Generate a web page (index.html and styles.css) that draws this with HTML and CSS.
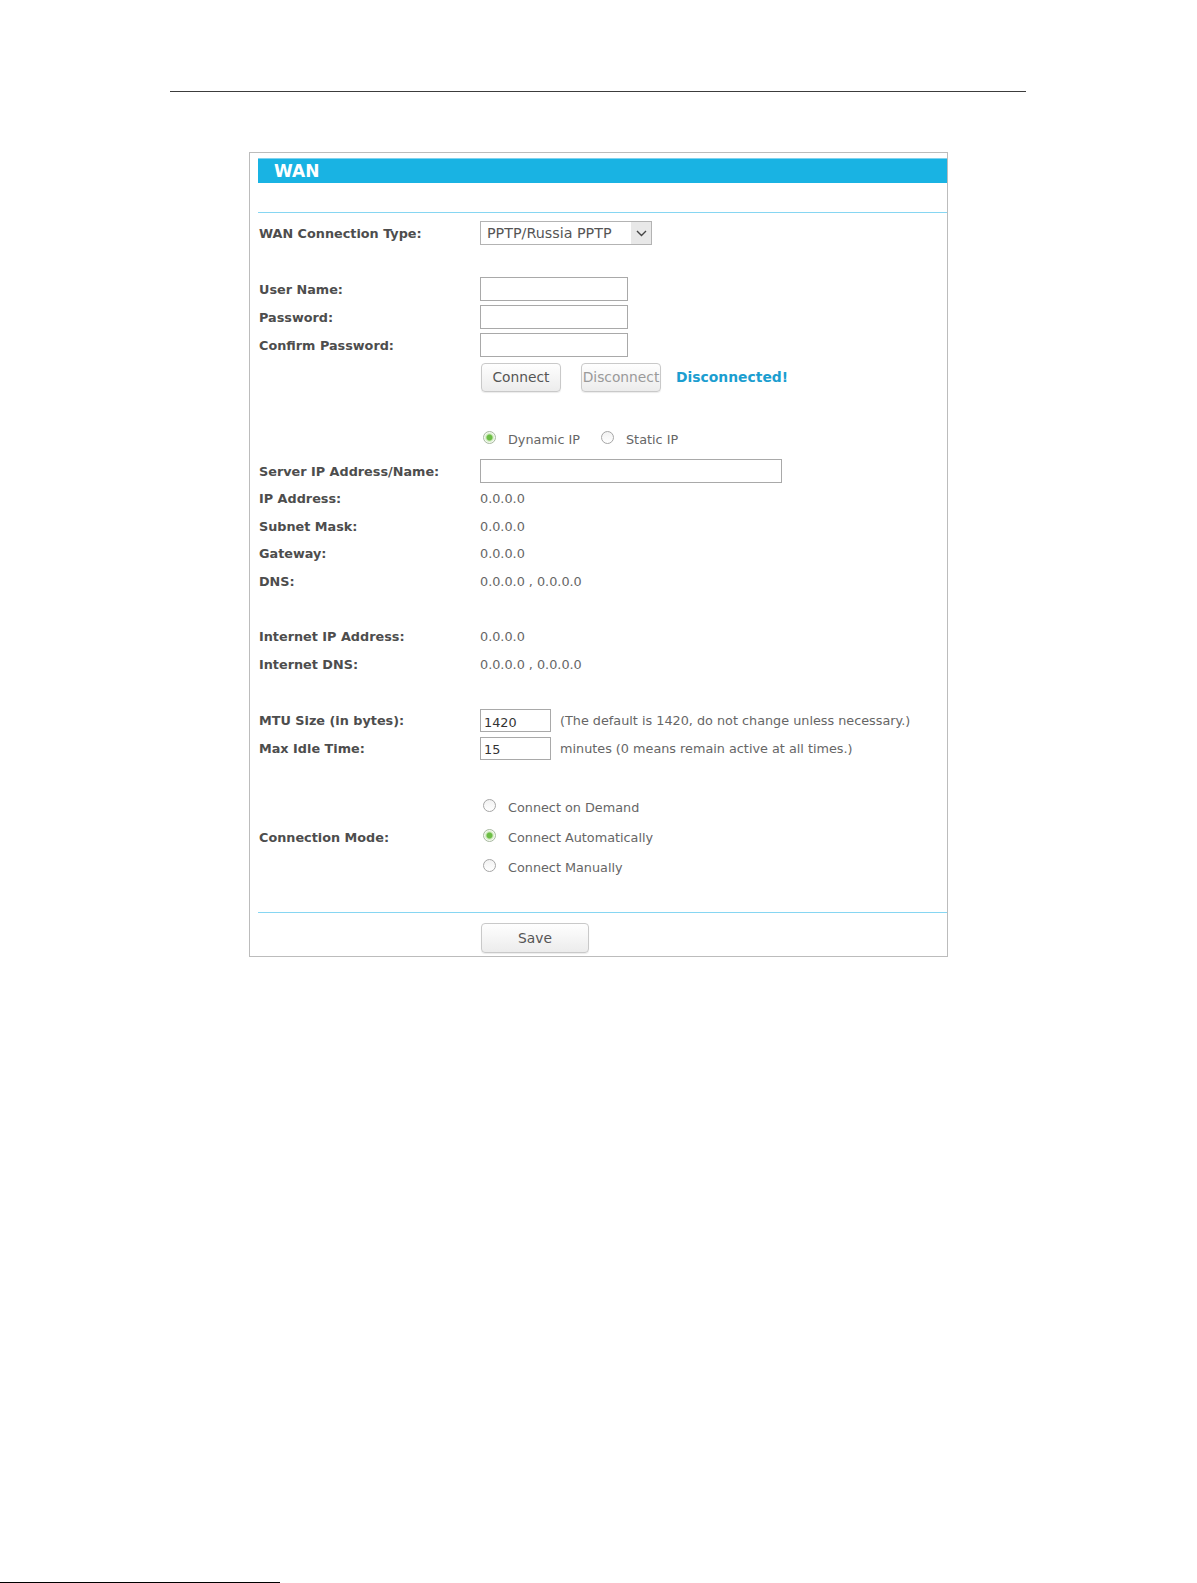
FILE: index.html
```html
<!DOCTYPE html>
<html lang="en">
<head>
  <meta charset="UTF-8">
  <meta name="viewport" content="width=device-width, initial-scale=1.0">
  <title>WAN</title>
  <link rel="stylesheet" href="styles.css">
</head>
<body>

  <div class="page-rule"></div>

  <div class="panel">
    <div class="panel-title">WAN</div>
    <div class="divider"></div>

    <div class="row first">
      <span class="label">WAN Connection Type:</span>
      <div class="select">
        <span class="select-text">PPTP/Russia PPTP</span>
        <span class="select-arrow">
          <svg width="11" height="7" viewBox="0 0 11 7"><polyline points="1,1 5.5,5.5 10,1" fill="none" stroke="#444" stroke-width="1.4"/></svg>
        </span>
      </div>
    </div>

    <div class="section">
      <div class="row">
        <span class="label">User Name:</span>
        <input class="text-input" type="text">
      </div>
      <div class="row">
        <span class="label">Password:</span>
        <input class="text-input" type="password">
      </div>
      <div class="row">
        <span class="label">Confirm Password:</span>
        <input class="text-input" type="password">
      </div>
      <div class="row buttons">
        <span class="label"></span>
        <button class="btn">Connect</button>
        <button class="btn disabled">Disconnect</button>
        <span class="status">Disconnected!</span>
      </div>
    </div>

    <div class="section ip-type">
      <div class="row">
        <span class="label"></span>
        <span class="radio checked"></span><span class="radio-text">Dynamic IP</span>
        <span class="radio second"></span><span class="radio-text">Static IP</span>
      </div>
      <div class="row server">
        <span class="label">Server IP Address/Name:</span>
        <input class="text-input wide" type="text">
      </div>
      <div class="row info">
        <span class="label">IP Address:</span>
        <span class="value">0.0.0.0</span>
      </div>
      <div class="row info">
        <span class="label">Subnet Mask:</span>
        <span class="value">0.0.0.0</span>
      </div>
      <div class="row info">
        <span class="label">Gateway:</span>
        <span class="value">0.0.0.0</span>
      </div>
      <div class="row info">
        <span class="label">DNS:</span>
        <span class="value">0.0.0.0 , 0.0.0.0</span>
      </div>
    </div>

    <div class="section internet">
      <div class="row info">
        <span class="label">Internet IP Address:</span>
        <span class="value">0.0.0.0</span>
      </div>
      <div class="row info">
        <span class="label">Internet DNS:</span>
        <span class="value">0.0.0.0 , 0.0.0.0</span>
      </div>
    </div>

    <div class="section mtu">
      <div class="row info">
        <span class="label">MTU Size (in bytes):</span>
        <input class="text-input short" type="text" value="1420">
        <span class="value hint">(The default is 1420, do not change unless necessary.)</span>
      </div>
      <div class="row info">
        <span class="label">Max Idle Time:</span>
        <input class="text-input short" type="text" value="15">
        <span class="value hint">minutes (0 means remain active at all times.)</span>
      </div>
    </div>

    <div class="section mode">
      <span class="label">Connection Mode:</span>
      <div class="mode-list">
        <div class="mode-item"><span class="radio"></span><span class="radio-text">Connect on Demand</span></div>
        <div class="mode-item"><span class="radio checked"></span><span class="radio-text">Connect Automatically</span></div>
        <div class="mode-item"><span class="radio"></span><span class="radio-text">Connect Manually</span></div>
      </div>
    </div>

    <div class="divider bottom"></div>

    <div class="save-row">
      <button class="btn save">Save</button>
    </div>
  </div>

  <div class="page-foot"></div>

</body>
</html>
```

FILE: styles.css
```css
body { margin: 0; background: #fff; font-family: "DejaVu Sans", Verdana, sans-serif; font-size: 12.8px; color: #666; }
.page-rule { width: 856px; height: 1px; margin: 91px 0 0 170px; background: #3c3c3c; }
.panel { width: 689px; margin: 60px 0 0 249px; border: 1px solid #bcbcbc; padding: 5px 0 3px 8px; }

.panel-title { height: 24px; border-top: 1px solid #7fd2ee; background: #19b3e3; color: #fff; font-weight: bold; font-size: 17px; line-height: 24px; padding-left: 16px; }
.divider { height: 1px; margin-top: 29px; background: #86d6f2; }
.divider.bottom { margin-top: 30px; }

.row { display: flex; align-items: center; height: 28px; }
.row.first { margin-top: 6px; }
.label { width: 222px; flex: none; padding-left: 1px; box-sizing: border-box; font-weight: bold; color: #4d4d4d; font-size: 12.8px; }

.section { margin-top: 28px; }
.section.ip-type { margin-top: 32px; }
.row.buttons { height: 32px; margin-top: 2px; }
.row.server { margin-top: 4px; }
.row.info { height: 27.5px; }
.section.mtu { margin-top: 29px; }
.section.mode { margin-top: 30px; display: flex; align-items: center; }

.select { width: 172px; height: 24px; box-sizing: border-box; border: 1px solid #b3b3b3; display: flex; align-items: stretch; background: #fff; }
.select-text { flex: 1; padding-left: 6px; line-height: 22px; color: #555; font-size: 14.3px; }
.select-arrow { width: 20px; background: #e8e8e8; display: flex; align-items: center; justify-content: center; }

.text-input { width: 148px; height: 24px; box-sizing: border-box; border: 1px solid #a9a9a9; margin: 0; padding: 0 3px; font-family: inherit; font-size: 12.8px; color: #333; outline: none; }
.text-input.wide { width: 302px; }
.text-input.short { width: 71px; height: 23px; padding-top: 3px; }
.hint { margin-left: 9px; }

.btn { height: 29px; width: 80px; margin: 0 0 0 1px; padding: 0; border: 1px solid #c9c9c9; border-radius: 4px; background: linear-gradient(#fefefe, #ececec); font-family: inherit; font-size: 13.8px; color: #555; box-shadow: 0 1px 1px rgba(0, 0, 0, 0.08); }
.btn + .btn { margin-left: 20px; }
.btn.disabled { color: #9a9a9a; }
.status { margin-left: 15px; font-weight: bold; font-size: 13.9px; color: #1b9ed0; }

.radio { width: 13px; height: 13px; flex: none; box-sizing: border-box; border: 1px solid #a6a6a6; border-radius: 50%; margin: 0 12px 0 3px; background: linear-gradient(#f2f2f2, #fff); position: relative; top: -2px; }
.radio.checked { background: radial-gradient(circle, #6cbd45 0, #6cbd45 2.5px, #c9e8b6 3.5px, #f4faf0 5px); border-color: #a8b8a0; }
.radio.second { margin-left: 21px; }
.radio-text { color: #666; }

.mode-list { display: flex; flex-direction: column; }
.mode-item { display: flex; align-items: center; height: 30px; }

.save-row { padding-left: 222px; margin-top: 10px; }
.btn.save { width: 108px; height: 30px; }

.page-foot { width: 280px; height: 1px; margin-top: 625px; background: #000; }
```
